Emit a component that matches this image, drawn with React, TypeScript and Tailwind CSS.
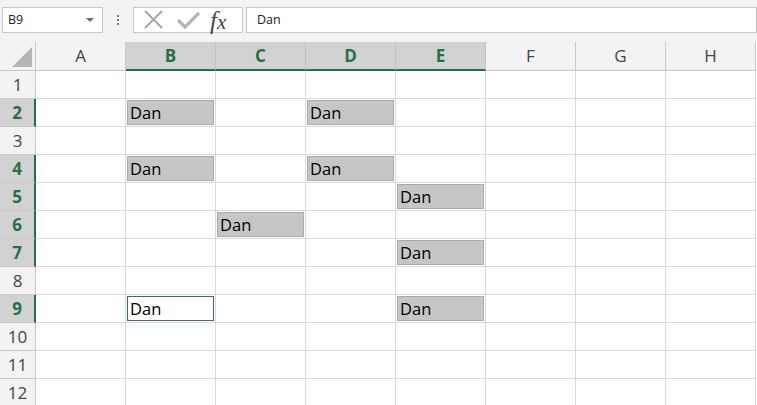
import React from 'react'

const cols = ['A', 'B', 'C', 'D', 'E', 'F', 'G', 'H']
const selCols = ['B', 'C', 'D', 'E']
const selRows = [2, 4, 5, 6, 7, 9]

// cells that are part of the multi-range selection
const filled: Record<string, boolean> = {
  B2: true,
  D2: true,
  B4: true,
  D4: true,
  E5: true,
  C6: true,
  E7: true,
  E9: true,
}
const active = 'B9'

function Cell({ id }: { id: string }) {
  const isFilled = filled[id]
  const isActive = id === active
  return (
    <div className="h-[28px] border-r border-b border-[#dadada] bg-white p-px">
      {isFilled && (
        <div className="flex h-full items-end border border-[#aaaaaa] bg-[#c6c6c6] pl-[2px] text-[16.5px] leading-[22px] text-black">
          Dan
        </div>
      )}
      {isActive && (
        <div className="flex h-full items-end border border-[#3e7152] bg-white pl-[2px] text-[16.5px] leading-[22px] text-black">
          Dan
        </div>
      )}
    </div>
  )
}

export default function App() {
  return (
    <main
      className="w-[757px] h-[405px] overflow-hidden bg-white"
      style={{ fontFamily: '"Open Sans", "Liberation Sans", sans-serif' }}
    >
      {/* formula bar */}
      <div className="flex h-[42px] items-start bg-[#f3f3f3] pt-[7px] pl-[2px]">
        <div className="flex h-[26px] w-[101px] items-center justify-between border border-[#c8c8c8] bg-white pl-[5px] pr-[8px] text-[12.5px] text-[#222]">
          <span>B9</span>
          <span className="h-0 w-0 border-x-[4px] border-t-[4px] border-x-transparent border-t-[#6a6a6a]" />
        </div>
        <div className="flex h-[26px] w-[30px] flex-col items-center justify-center gap-[2px]">
          <span className="h-[2px] w-[2px] bg-[#777]" />
          <span className="h-[2px] w-[2px] bg-[#777]" />
          <span className="h-[2px] w-[2px] bg-[#777]" />
        </div>
        <div className="flex h-[26px] w-[110px] items-center border border-[#c8c8c8] bg-white">
          <svg width="36" height="24" viewBox="0 0 36 24" className="ml-[2px]">
            <path d="M9 3 L26 20 M26 3 L9 20" stroke="#a8a8a8" strokeWidth="2" fill="none" />
          </svg>
          <svg width="34" height="24" viewBox="0 0 34 24">
            <path d="M6 12 L13 19 L27 5" stroke="#b4b4b4" strokeWidth="3.2" fill="none" />
          </svg>
          <span
            className="ml-[4px] text-[25px] italic leading-none text-[#444]"
            style={{ fontFamily: '"Liberation Serif", serif' }}
          >
            f<span className="text-[21px]">x</span>
          </span>
        </div>
        <div className="ml-[3px] flex h-[26px] flex-1 items-center border border-[#c8c8c8] bg-white pl-[10px] text-[12.5px] text-[#222]">
          Dan
        </div>
      </div>

      {/* sheet grid */}
      <div className="grid grid-cols-[36px_repeat(8,90px)]">
        <div className="relative h-[29px] border-r border-b border-[#c8c8c8] bg-[#f3f3f3]">
          <div className="absolute right-[3px] bottom-[3px] h-0 w-0 [border-bottom:20px_solid_#b5b5b5] [border-left:20px_solid_transparent]" />
        </div>
        {cols.map((c) => {
          const sel = selCols.includes(c)
          return (
            <div
              key={c}
              className={
                sel
                  ? 'flex h-[29px] items-center justify-center border-r border-b-2 border-r-[#c0c0c0] border-b-[#217346] bg-[#d2d2d2] text-[17px] font-bold text-[#217346]'
                  : 'flex h-[29px] items-center justify-center border-r border-b border-[#c8c8c8] bg-[#f3f3f3] text-[17px] text-[#444]'
              }
            >
              {c}
            </div>
          )
        })}
        {Array.from({ length: 12 }, (_, i) => i + 1).map((r) => (
          <React.Fragment key={r}>
            <div
              className={
                selRows.includes(r)
                  ? 'flex h-[28px] items-center justify-center border-r-2 border-b border-r-[#217346] border-b-[#c8c8c8] bg-[#d2d2d2] text-[17px] font-bold text-[#217346]'
                  : 'flex h-[28px] items-center justify-center border-r border-b border-[#c8c8c8] bg-[#f3f3f3] text-[17px] text-[#444]'
              }
            >
              {r}
            </div>
            {cols.map((c) => (
              <Cell key={c + r} id={c + r} />
            ))}
          </React.Fragment>
        ))}
      </div>
    </main>
  )
}
